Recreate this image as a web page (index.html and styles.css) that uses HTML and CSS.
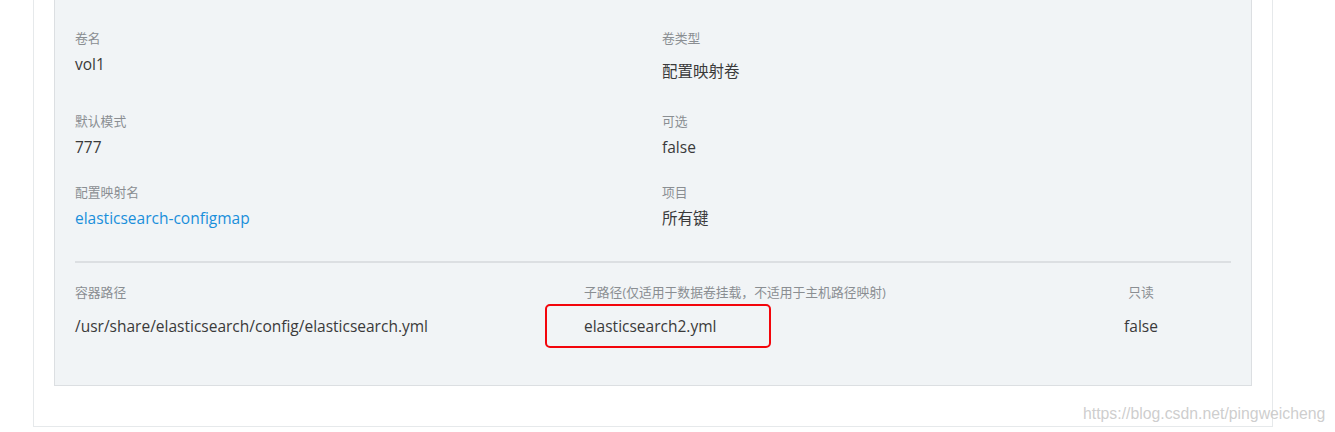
FILE: index.html
```html
<!DOCTYPE html>
<html lang="zh">
<head>
<meta charset="utf-8">
<title>Volume</title>
<link rel="stylesheet" href="styles.css">
</head>
<body>
<div class="card">
  <div class="panel">
    <div class="row row-first">
      <div class="item">
        <div class="label">卷名</div>
        <div class="value">vol1</div>
      </div>
      <div class="item">
        <div class="label">卷类型</div>
        <div class="value value-tag">配置映射卷</div>
      </div>
    </div>
    <div class="row">
      <div class="item">
        <div class="label">默认模式</div>
        <div class="value">777</div>
      </div>
      <div class="item">
        <div class="label">可选</div>
        <div class="value">false</div>
      </div>
    </div>
    <div class="row">
      <div class="item">
        <div class="label">配置映射名</div>
        <div class="value"><a class="link" href="#">elasticsearch-configmap</a></div>
      </div>
      <div class="item">
        <div class="label">项目</div>
        <div class="value">所有键</div>
      </div>
    </div>
    <div class="divider"></div>
    <div class="mounts">
      <div class="label">容器路径</div>
      <div class="label">子路径(仅适用于数据卷挂载，不适用于主机路径映射)</div>
      <div class="label center">只读</div>
      <div class="value">/usr/share/elasticsearch/config/elasticsearch.yml</div>
      <div class="value highlight-cell">elasticsearch2.yml<span class="highlight"></span></div>
      <div class="value center">false</div>
    </div>
  </div>
</div>
<div class="watermark">https://blog.csdn.net/pingweicheng</div>
</body>
</html>
```

FILE: styles.css
```css
html, body {
  margin: 0;
  padding: 0;
  background: #ffffff;
}
body {
  position: relative;
  width: 1335px;
  height: 432px;
  overflow: hidden;
  font-family: "Open Sans", "Noto Sans CJK SC", sans-serif;
  color: #333333;
}
.card {
  margin-left: 33px;
  border: 1px solid #e6e9eb;
  border-top: none;
  padding: 0 20px 40px 20px;
  box-sizing: content-box;
  width: 1198px;
}
.panel {
  background: #f1f4f6;
  border: 1px solid #dcdfe2;
  border-top: none;
  padding: 31px 20px 47px 20px;
}
.row {
  display: grid;
  grid-template-columns: 587px 1fr;
  margin-bottom: 26px;
}
.row-first .value-tag {
  padding-top: 7px;
  padding-bottom: 5px;
}
.label {
  font-size: 12.8px;
  line-height: 15px;
  margin-bottom: 6px;
  color: #8a8e92;
}
.value {
  font-size: 15.5px;
  line-height: 24px;
  margin-top: 0;
  color: #3a3a3a;
}
.link {
  color: #1a8fdb;
  text-decoration: none;
}
.divider {
  height: 2px;
  background: #dcdfe2;
  margin: 31px 0 22px 0;
}
.mounts {
  display: grid;
  grid-template-columns: 509px 1fr 180px;
  row-gap: 11px;
}
.mounts .label {
  margin-bottom: 3px;
}
.center {
  text-align: center;
}
.highlight-cell {
  position: relative;
}
.highlight {
  position: absolute;
  left: -39px;
  top: -10px;
  width: 226px;
  height: 44px;
  border: 2px solid #f3050b;
  border-radius: 5px;
  box-sizing: border-box;
}
.watermark {
  position: absolute;
  left: 1083px;
  top: 404px;
  font-family: "Liberation Sans", Arial, sans-serif;
  font-size: 15.8px;
  line-height: 20px;
  color: rgba(200, 200, 200, 0.9);
  white-space: nowrap;
}
```
